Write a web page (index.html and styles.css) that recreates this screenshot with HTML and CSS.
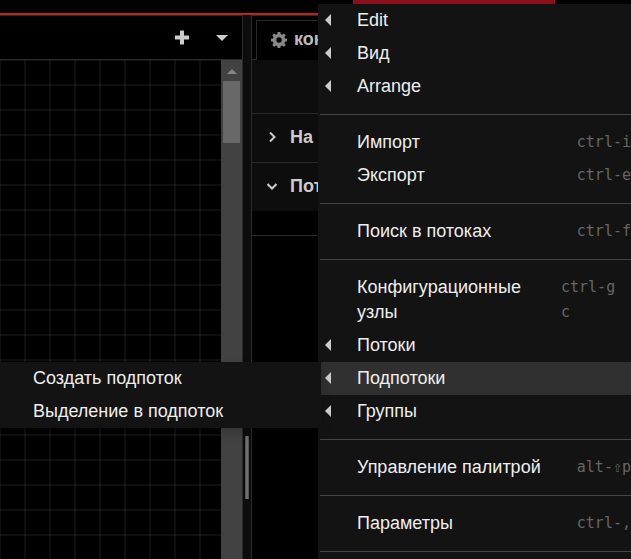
FILE: index.html
```html
<!DOCTYPE html>
<html lang="ru">
<head>
<meta charset="utf-8">
<title>Node-RED</title>
<link rel="stylesheet" href="styles.css">
</head>
<body>
<div class="app">
  <header class="header"><button class="deploy" type="button" aria-label="Deploy"></button></header>
  <div class="main">
    <section class="workspace">
      <div class="tabs">
        <button class="tab-button" type="button" aria-label="+">
          <svg width="16" height="16" viewBox="0 0 16 16"><path d="M6.500 0.500h3a.5.5 0 0 1 .5.5v4.500h4.500a.5.5 0 0 1 .5.5v3a.5.5 0 0 1-.5.5H10V14a.5.5 0 0 1-.5.5h-3A.5.5 0 0 1 6 14V9.500H1.500A.5.5 0 0 1 1 9V6a.5.5 0 0 1 .5-.5H6V1a.5.5 0 0 1 .5-.5z"/></svg>
        </button>
        <button class="tab-button" type="button" aria-label="▾">
          <svg width="12" height="6" viewBox="0 0 12 6"><path d="M0 0h12L6 6z"/></svg>
        </button>
      </div>
      <div class="canvas">
        <div class="scrollbar">
          <svg width="10" height="5" viewBox="0 0 10 5"><path d="M0 5h10L5 0z"/></svg>
          <div class="thumb"></div>
        </div>
      </div>
    </section>
    <div class="separator"><div class="handle"></div></div>
    <aside class="sidebar">
      <div class="side-tabs">
        <button class="side-tab" type="button">
          <svg width="16" height="16" viewBox="0 0 16 16"><path fill-rule="evenodd" d="M6.700 0h2.600l.4 2.100 1.400.6 1.800-1.300 1.800 1.800-1.300 1.800.6 1.400 2 .4v2.500l-2 .4-.6 1.400 1.300 1.800-1.800 1.800-1.800-1.200-1.400.5-.4 2H6.700l-.4-2-1.400-.5-1.800 1.200-1.800-1.800 1.200-1.800-.5-1.400-2-.4V6.800l2-.4.5-1.400-1.200-1.800 1.800-1.800 1.800 1.300 1.400-.6zM8 5.300a2.700 2.700 0 1 0 0 5.400 2.700 2.700 0 0 0 0-5.400z"/></svg>
          <span>кон</span>
        </button>
      </div>
      <div class="side-toolbar"></div>
      <button class="category" type="button">
        <svg width="10" height="10" viewBox="0 0 10 10"><path d="M3 0.500 7.500 5 3 9.500"/></svg>
        <span>На</span>
      </button>
      <button class="category" type="button">
        <svg width="10" height="10" viewBox="0 0 10 10"><path d="M0.500 3 5 7.500 9.500 3"/></svg>
        <span>Пот</span>
      </button>
      <div class="category-body"></div>
    </aside>
  </div>

  <nav class="menu">
    <ul>
      <li><a class="item parent" href="#"><span class="label">Edit</span></a></li>
      <li><a class="item parent" href="#"><span class="label">Вид</span></a></li>
      <li><a class="item parent" href="#"><span class="label">Arrange</span></a></li>
      <li class="divider"></li>
      <li><a class="item" href="#"><span class="label">Импорт</span><kbd>ctrl-i</kbd></a></li>
      <li><a class="item" href="#"><span class="label">Экспорт</span><kbd>ctrl-e</kbd></a></li>
      <li class="divider"></li>
      <li><a class="item" href="#"><span class="label">Поиск в потоках</span><kbd>ctrl-f</kbd></a></li>
      <li class="divider"></li>
      <li><a class="item" href="#"><span class="label">Конфигурационные узлы</span><kbd class="chord">ctrl-g c</kbd></a></li>
      <li><a class="item parent" href="#"><span class="label">Потоки</span></a></li>
      <li class="open">
        <a class="item parent" href="#"><span class="label">Подпотоки</span></a>
        <ul class="submenu">
          <li><a class="item" href="#">Создать подпоток</a></li>
          <li><a class="item" href="#">Выделение в подпоток</a></li>
        </ul>
      </li>
      <li><a class="item parent" href="#"><span class="label">Группы</span></a></li>
      <li class="divider"></li>
      <li><a class="item" href="#"><span class="label">Управление палитрой</span><kbd>alt-⇧p</kbd></a></li>
      <li class="divider"></li>
      <li><a class="item" href="#"><span class="label">Параметры</span><kbd>ctrl-,</kbd></a></li>
      <li class="divider"></li>
    </ul>
  </nav>
</div>
</body>
</html>
```
FILE: styles.css
```css
* { box-sizing: border-box; }

body {
  margin: 0;
  background: #000;
  color: #eee;
  font: 18px/25px "Liberation Sans", Arial, sans-serif;
}

button {
  padding: 0;
  border: 0;
  background: none;
  color: inherit;
  font: inherit;
}

ul {
  margin: 0;
  padding: 0;
  list-style: none;
}

.app {
  position: relative;
  display: flex;
  flex-direction: column;
  height: 100vh;
  overflow: hidden;
}

.header {
  display: flex;
  justify-content: flex-end;
  flex: none;
  height: 15px;
  padding-right: 76px;
  border-bottom: 2px solid #c02020;
}

.deploy {
  width: 202px;
  background: #8c101c;
}

.main {
  display: flex;
  flex: 1;
  min-height: 0;
}

/* Workspace */
.workspace {
  display: flex;
  flex-direction: column;
  width: 243px;
  border: solid #2a2a2a;
  border-width: 1px 1px 0 0;
}

.tabs {
  display: flex;
  justify-content: flex-end;
  height: 44px;
  border-bottom: 1px solid #2a2a2a;
}

.tab-button {
  display: flex;
  align-items: center;
  justify-content: center;
  width: 40px;
  fill: #ccc;
}

.canvas {
  display: flex;
  justify-content: flex-end;
  flex: 1;
  background:
    linear-gradient(90deg, rgba(255, 255, 255, 0.06) 2px, transparent 2px) -1px -1px / 25px 25px,
    linear-gradient(rgba(255, 255, 255, 0.06) 2px, transparent 2px) -1px -1px / 25px 25px;
}

.scrollbar {
  display: flex;
  flex-direction: column;
  align-items: center;
  gap: 7px;
  width: 21px;
  padding-top: 9px;
  background: #424242;
  fill: #868686;
}

.thumb {
  width: 17px;
  height: 62px;
  background: #686868;
}

.separator {
  width: 8px;
  padding: 421px 2px 0;
  background: #0d0d0d;
}

.handle {
  height: 63px;
  border: solid #555;
  border-width: 0 1px;
  background: #707070;
}

/* Sidebar */
.sidebar {
  flex: 1;
  min-width: 0;
  border: solid #2a2a2a;
  border-width: 1px 0 0 1px;
  color: #ccc;
  font-weight: bold;
}

.side-tabs {
  display: flex;
  height: 44px;
  padding: 4px 0 0 4px;
  box-shadow: inset 0 -1px #2a2a2a;
}

.side-tab {
  display: flex;
  align-items: center;
  gap: 7px;
  padding: 0 14px 2px;
  border: solid #2a2a2a;
  border-width: 1px 1px 0;
  background: #000;
  color: #bbb;
  fill: #888;
}

.side-toolbar {
  height: 53px;
  background: #0d0d0d;
}

.category {
  display: flex;
  align-items: center;
  gap: 13px;
  width: 100%;
  height: 49px;
  padding: 0 15px 2px;
  border-top: 1px solid #2a2a2a;
  background: #0d0d0d;
}

.category svg {
  fill: none;
  stroke: #ccc;
  stroke-width: 2;
}

.category-body {
  height: 25px;
  border-bottom: 1px solid #2a2a2a;
}

/* Main menu */
.menu {
  position: absolute;
  top: 4px;
  right: 0;
  width: 313px;
  min-height: 100%;
  padding-left: 2px;
  background: #131313;
}

.menu li {
  position: relative;
}

.item {
  display: flex;
  justify-content: space-between;
  padding: 4px 0 4px 37px;
  color: #eee;
  text-decoration: none;
}

.parent::before {
  content: "";
  width: 6px;
  height: 12px;
  margin: 6px 26px 0 -32px;
  background: #ccc;
  clip-path: polygon(100% 0, 100% 100%, 0 50%);
}

.label {
  flex: 1;
}

kbd {
  color: #666;
  font: 15px/25px "DejaVu Sans Mono", monospace;
}

.chord {
  width: 70px;
}

.open > .item {
  background: #303030;
}

.menu .divider {
  height: 1px;
  margin: 11px 0;
  background: #444;
}

.submenu {
  position: absolute;
  top: 0;
  right: calc(100% - 1px);
  width: 321px;
  background: #131313;
  box-shadow: 0 5px 10px rgba(0, 0, 0, 0.2);
}

.submenu .item {
  padding-left: 33px;
}
```
